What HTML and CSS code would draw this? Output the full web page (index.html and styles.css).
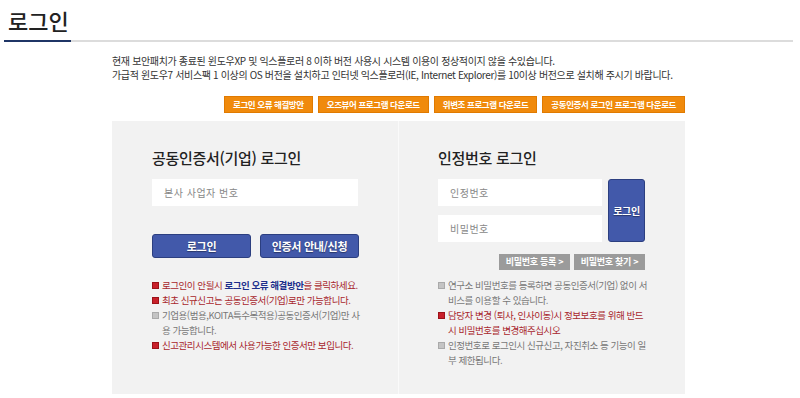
FILE: index.html
```html
<!DOCTYPE html>
<html lang="ko">
<head>
    <meta charset="UTF-8">
    <meta name="viewport" content="width=device-width, initial-scale=1.0">
    <title>로그인</title>
    <link rel="stylesheet" href="styles.css">
</head>
<body>
    <div class="page-head">
        <h1>로그인</h1>
    </div>

    <div class="content">
        <p class="notice">
            현재 보안패치가 종료된 윈도우XP 및 익스플로러 8 이하 버전 사용시 시스템 이용이 정상적이지 않을 수있습니다.<br>
            가급적 윈도우7 서비스팩 1 이상의 OS 버전을 설치하고 인터넷 익스플로러(IE, Internet Explorer)를 10이상 버전으로 설치해 주시기 바랍니다.
        </p>

        <div class="download-bar">
            <a class="btn-orange" href="#">로그인 오류 해결방안</a>
            <a class="btn-orange" href="#">오즈뷰어 프로그램 다운로드</a>
            <a class="btn-orange" href="#">위변조 프로그램 다운로드</a>
            <a class="btn-orange" href="#">공동인증서 로그인 프로그램 다운로드</a>
        </div>

        <div class="login-box">
            <div class="login-col">
                <h2>공동인증서(기업) 로그인</h2>
                <input type="text" class="field field-wide" placeholder="본사 사업자 번호">
                <div class="btn-row">
                    <button class="btn-blue">로그인</button>
                    <button class="btn-blue">인증서 안내/신청</button>
                </div>
                <ul class="notes">
                    <li class="red"><span class="mark"></span>로그인이 안될시 <b class="link">로그인 오류 해결방안</b>을 클릭하세요.</li>
                    <li class="red"><span class="mark"></span>최초 신규신고는 공동인증서(기업)로만 가능합니다.</li>
                    <li><span class="mark"></span>기업용(범용,KOITA특수목적용)공동인증서(기업)만 사용 가능합니다.</li>
                    <li class="red"><span class="mark"></span>신고관리시스템에서 사용가능한 인증서만 보입니다.</li>
                </ul>
            </div>

            <div class="login-col col-right">
                <h2>인정번호 로그인</h2>
                <div class="pw-form">
                    <div class="pw-fields">
                        <input type="text" class="field" placeholder="인정번호">
                        <input type="password" class="field" placeholder="비밀번호">
                    </div>
                    <button class="btn-blue btn-tall">로그인</button>
                </div>
                <div class="gray-row">
                    <a class="btn-gray" href="#">비밀번호 등록 &gt;</a>
                    <a class="btn-gray" href="#">비밀번호 찾기 &gt;</a>
                </div>
                <ul class="notes">
                    <li><span class="mark"></span>연구소 비밀번호를 등록하면 공동인증서(기업) 없이 서비스를 이용할 수 있습니다.</li>
                    <li class="red"><span class="mark"></span>담당자 변경 (퇴사, 인사이동)시 정보보호를 위해 반드시 비밀번호를 변경해주십시오</li>
                    <li><span class="mark"></span>인정번호로 로그인시 신규신고, 자진취소 등 기능이 일부 제한됩니다.</li>
                </ul>
            </div>
        </div>
    </div>
</body>
</html>
```

FILE: styles.css
```css
* {
    margin: 0;
    padding: 0;
    box-sizing: border-box;
}

body {
    font-family: "Noto Sans CJK KR", "Noto Sans", sans-serif;
    background: white;
    color: #333;
}

a {
    text-decoration: none;
}

.page-head {
    margin: 0 7px 0 4px;
    padding-top: 4px;
    border-bottom: 2px solid #dcdcdc;
    height: 42px;
}

h1 {
    display: inline-block;
    height: 38px;
    padding: 0 2px 0 4px;
    font-size: 22px;
    font-weight: 500;
    line-height: 32px;
    color: #222;
    border-bottom: 2px solid #1f3566;
}

.content {
    width: 573px;
    margin-left: 112px;
}

.notice {
    margin-top: 12px;
    font-size: 10px;
    line-height: 14px;
    color: #333;
    letter-spacing: -0.35px;
    white-space: nowrap;
}

.download-bar {
    display: flex;
    justify-content: flex-end;
    gap: 5px;
    margin-top: 14px;
}

.btn-orange {
    display: block;
    height: 17px;
    padding: 0 8px;
    background: #f08a0c;
    border: 1px solid #e07a00;
    color: white;
    font-size: 8.5px;
    font-weight: 700;
    line-height: 15px;
    letter-spacing: -0.4px;
}

.login-box {
    display: grid;
    grid-template-columns: 286px 287px;
    height: 273px;
    margin-top: 8px;
    background: #f2f2f2;
}

.login-col {
    padding: 27px 0 0 40px;
}

.col-right {
    padding-left: 39px;
    border-left: 1px solid #fafafa;
}

h2 {
    font-size: 15px;
    font-weight: 500;
    line-height: 20px;
    color: #222;
    letter-spacing: -0.3px;
    margin-bottom: 11px;
}

.field {
    display: block;
    width: 164px;
    height: 27px;
    padding: 0 12px;
    border: none;
    background: white;
    font-family: inherit;
    font-size: 10px;
    letter-spacing: 0.5px;
}

.field::placeholder {
    color: #888;
}

.field-wide {
    width: 206px;
}

.btn-row {
    display: flex;
    gap: 9px;
    margin-top: 28px;
}

.btn-blue {
    width: 99px;
    height: 24px;
    background: #4259aa;
    border: 1px solid #2c3f80;
    border-radius: 3px;
    color: white;
    font-family: inherit;
    font-size: 11px;
    font-weight: 700;
    letter-spacing: -0.3px;
    text-shadow: 0 1px 1px rgba(0, 0, 0, 0.4);
    cursor: pointer;
}

.pw-form {
    display: flex;
    gap: 6px;
}

.pw-fields {
    display: flex;
    flex-direction: column;
    gap: 9px;
}

.btn-tall {
    width: 37px;
    height: 63px;
    padding: 0;
    font-size: 10px;
}

.gray-row {
    display: flex;
    justify-content: flex-end;
    gap: 4px;
    width: 207px;
    margin-top: 12px;
}

.btn-gray {
    display: block;
    width: 71px;
    height: 16px;
    background: #9b9b9b;
    color: white;
    font-size: 9px;
    font-weight: 700;
    line-height: 16px;
    letter-spacing: -0.3px;
    text-align: center;
}

.notes {
    list-style: none;
    width: 208px;
    margin-top: 20px;
    font-size: 9.5px;
    line-height: 15px;
    letter-spacing: -0.45px;
    color: #777;
}

.col-right .notes {
    width: 210px;
    margin-top: 8px;
}

.notes li {
    position: relative;
    padding-left: 10px;
}

.notes .red {
    color: #a8262c;
}

.mark {
    position: absolute;
    left: 0;
    top: 4px;
    width: 7px;
    height: 7px;
    background: #c4c4c4;
    border: 1px solid #aaa;
}

.red .mark {
    background: #c8202a;
    border-color: #9c1219;
}

.link {
    color: #1c2f8c;
}
```
